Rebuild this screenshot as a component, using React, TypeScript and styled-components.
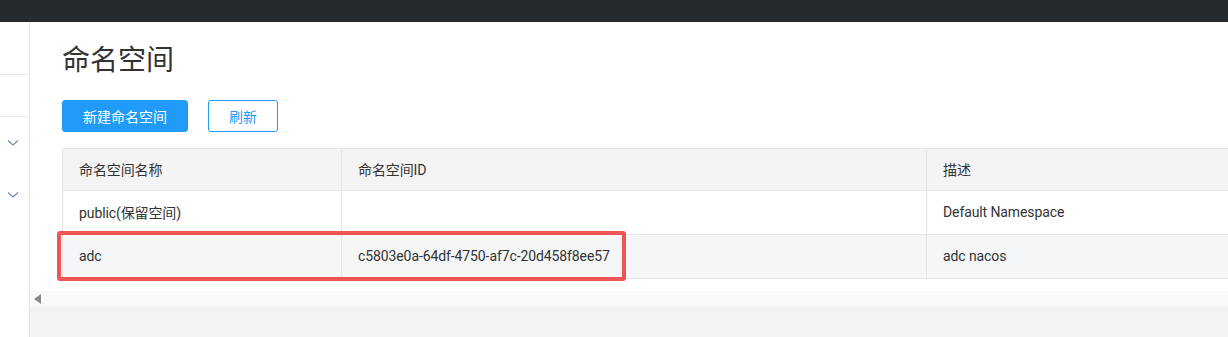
import React from 'react';
import styled, { createGlobalStyle } from 'styled-components';

const GlobalStyle = createGlobalStyle`
  html, body {
    margin: 0;
    padding: 0;
    background: #fff;
    overflow: hidden;
  }
  body {
    font-family: Roboto, "Noto Sans CJK SC", sans-serif;
    color: #333;
  }
`;

const Page = styled.div`
  width: 1228px;
  height: 337px;
  display: flex;
  flex-direction: column;
  overflow: hidden;
`;

const TopBar = styled.div`
  height: 22px;
  flex: none;
  background: #262a2f;
`;

const Body = styled.div`
  flex: 1;
  display: flex;
  min-height: 0;
`;

const Sidebar = styled.div`
  width: 29px;
  flex: none;
  border-right: 1px solid #e6e6e6;
  display: flex;
  flex-direction: column;
`;

const SideItem = styled.div<{ $h: number; $line?: boolean }>`
  height: ${({ $h }) => $h}px;
  border-bottom: ${({ $line }) => ($line ? '1px solid #e8e8e8' : 'none')};
  display: flex;
  align-items: center;
  padding-left: 7px;
`;

const Main = styled.div`
  flex: 1;
  min-width: 0;
  display: flex;
  flex-direction: column;
  background: #f3f3f3;
`;

const Content = styled.div`
  background: #fff;
  padding: 0 0 12px 32px;
`;

const Title = styled.h1`
  margin: 0;
  padding-top: 22px;
  height: 56px;
  box-sizing: border-box;
  font-size: 28px;
  font-weight: 400;
  line-height: 34px;
  color: #333;
`;

const Toolbar = styled.div`
  display: flex;
  gap: 20px;
  margin-top: 22px;
  margin-bottom: 16px;
`;

const Button = styled.button<{ $primary?: boolean }>`
  height: 32px;
  padding: 0 20px;
  border-radius: 3px;
  font-family: inherit;
  font-size: 14px;
  cursor: pointer;
  border: 1px solid #209bfa;
  background: ${({ $primary }) => ($primary ? '#209bfa' : '#fff')};
  color: ${({ $primary }) => ($primary ? '#fff' : '#209bfa')};
`;

const TableWrap = styled.div`
  position: relative;
  width: 1300px;
`;

const Table = styled.table`
  border-collapse: collapse;
  width: 1300px;
  table-layout: fixed;
  font-size: 14px;
  letter-spacing: -0.1px;
`;

const Th = styled.th<{ $w: number }>`
  box-sizing: border-box;
  width: ${({ $w }) => $w}px;
  height: 42px;
  padding: 0 16px 2px;
  text-align: left;
  font-weight: 400;
  background: #f4f4f4;
  border: 1px solid #e6e6e6;
  color: #333;
`;

const Tr = styled.tr<{ $alt?: boolean }>`
  background: ${({ $alt }) => ($alt ? '#f5f6f8' : '#fff')};
`;

const Td = styled.td`
  height: 42px;
  padding: 0 16px 1px;
  border: 1px solid #e6e6e6;
  color: #333;
`;

const Highlight = styled.div`
  position: absolute;
  left: -5px;
  top: 83px;
  width: 569px;
  height: 50px;
  box-sizing: border-box;
  border: 4px solid #f25353;
  border-radius: 3px;
  pointer-events: none;
`;

const ScrollTrack = styled.div`
  height: 15px;
  background: #fafafa;
  display: flex;
  align-items: center;
  padding-left: 4px;
`;

const Arrow = styled.div`
  width: 0;
  height: 0;
  border-top: 5px solid transparent;
  border-bottom: 5px solid transparent;
  border-right: 7px solid #8a8a8a;
`;

const Filler = styled.div`
  flex: 1;
  background: #f3f3f3;
`;

const Chevron = () => (
  <svg width="12" height="8" viewBox="0 0 12 8">
    <path d="M1 1.5 L6 6 L11 1.5" fill="none" stroke="#6f8bab" strokeWidth="1.2" />
  </svg>
);

const rows = [
  { name: 'public(保留空间)', id: '', desc: 'Default Namespace' },
  { name: 'adc', id: 'c5803e0a-64df-4750-af7c-20d458f8ee57', desc: 'adc nacos' },
];

export default function App() {
  return (
    <Page>
      <GlobalStyle />
      <TopBar />
      <Body>
        <Sidebar>
          <SideItem $h={52} $line />
          <SideItem $h={41} $line />
          <SideItem $h={52}>
            <Chevron />
          </SideItem>
          <SideItem $h={52}>
            <Chevron />
          </SideItem>
        </Sidebar>
        <Main>
          <Content>
            <Title>命名空间</Title>
            <Toolbar>
              <Button $primary>新建命名空间</Button>
              <Button>刷新</Button>
            </Toolbar>
            <TableWrap>
              <Table>
                <thead>
                  <tr>
                    <Th $w={279}>命名空间名称</Th>
                    <Th $w={585}>命名空间ID</Th>
                    <Th $w={436}>描述</Th>
                  </tr>
                </thead>
                <tbody>
                  {rows.map((r, i) => (
                    <Tr key={r.name} $alt={i === 1}>
                      <Td>{r.name}</Td>
                      <Td>{r.id}</Td>
                      <Td>{r.desc}</Td>
                    </Tr>
                  ))}
                </tbody>
              </Table>
              <Highlight />
            </TableWrap>
          </Content>
          <ScrollTrack>
            <Arrow />
          </ScrollTrack>
          <Filler />
        </Main>
      </Body>
    </Page>
  );
}
